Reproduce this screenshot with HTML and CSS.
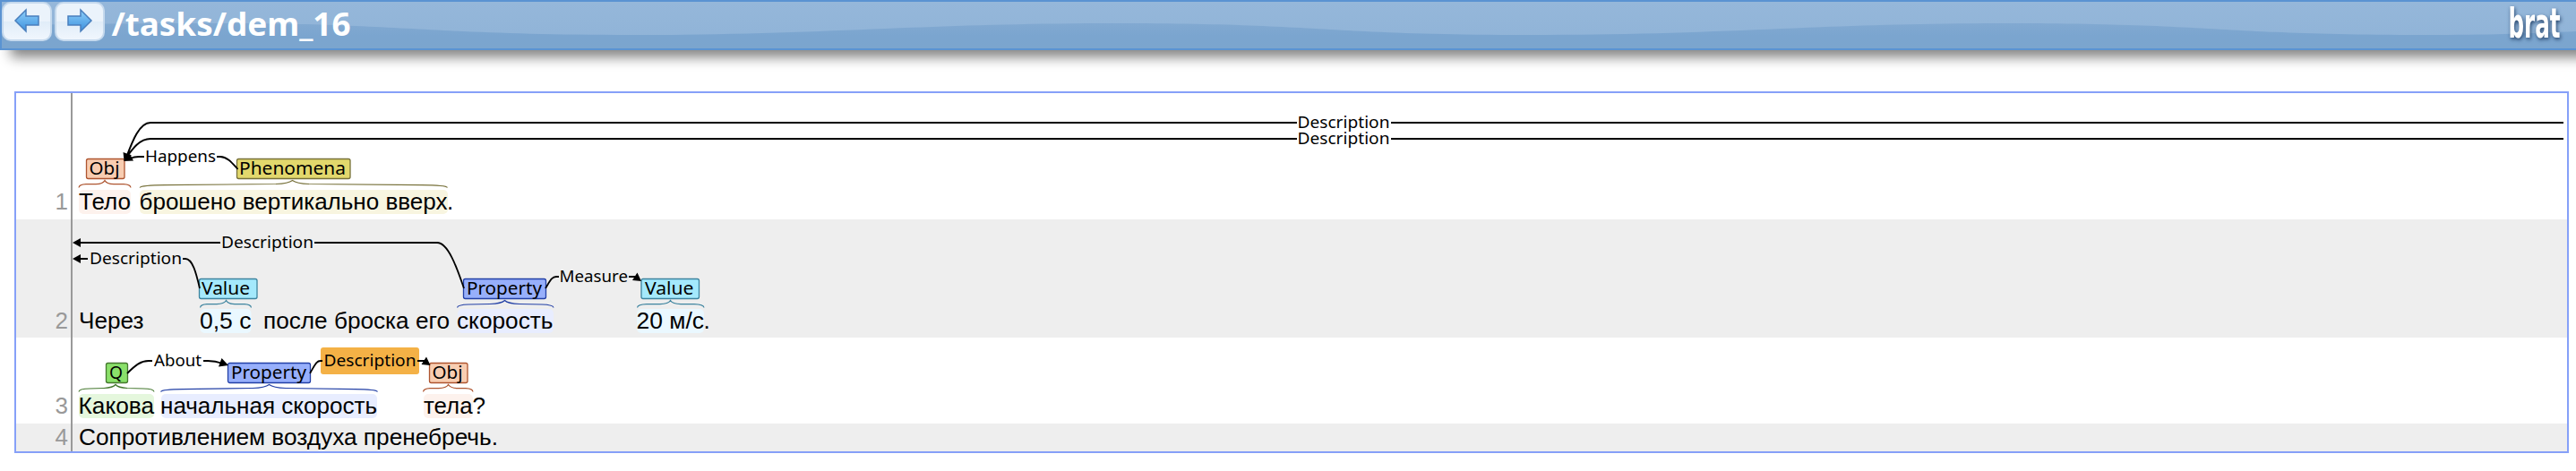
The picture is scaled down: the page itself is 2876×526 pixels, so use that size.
FILE: index.html
```html
<!DOCTYPE html>
<html lang="ru">
<head>
<meta charset="utf-8">
<title>/tasks/dem_16</title>
<link rel="stylesheet" href="styles.css">
</head>
<body>
<header class="header">
  <svg class="wave" width="2874" height="52" viewBox="2 2 2874 52">
    <path fill="url(#waveFill)" d="M2 29C80 26 160 26 247 26C450 26 480 39 706 39S1020 26 1247 26S1480 39 1706 39S2020 26 2247 26S2480 39 2706 39C2790 39 2830 37 2876 35V54H2z"/>
    <defs>
      <linearGradient id="waveFill" x1="0" y1="0" x2="0" y2="1"><stop offset="0" stop-color="#82a9d1"/><stop offset=".5" stop-color="#7ba5cf"/><stop offset="1" stop-color="#7ba5ce"/></linearGradient>
      <linearGradient id="arrowFill" x1="0" y1="0" x2="0" y2="1"><stop offset="0" stop-color="#8fd0fa"/><stop offset="1" stop-color="#3b8fdd"/></linearGradient>
    </defs>
  </svg>
  <nav class="nav">
    <button class="nav-button" aria-label="Previous"><svg width="30" height="28" viewBox="0 0 30 28"><path class="nav-arrow" d="M14 2V9H28V19H14V26L2 14z"/></svg></button>
    <button class="nav-button" aria-label="Next"><svg width="30" height="28" viewBox="0 0 30 28"><path class="nav-arrow" d="M16 2V9H2V19H16V26L28 14z"/></svg></button>
  </nav>
  <svg class="path" width="270" height="52" viewBox="124 2 270 52"><text x="124.500" y="40" textLength="267" lengthAdjust="spacingAndGlyphs">/tasks/dem_16</text></svg>
  <svg class="logo" width="66" height="52" viewBox="2796 2 66 52"><text x="2800.500" y="42" textLength="58" lengthAdjust="spacingAndGlyphs">brat</text></svg>
</header>

<main class="document">
  <section class="sentence s1">
    <div class="number">1</div>
    <svg class="canvas" width="2785" height="141" viewBox="81 104 2785 141">
      <rect class="mark obj" x="88" y="212" width="58" height="27" rx="5"/>
      <rect class="mark phen" x="156" y="212" width="344" height="27" rx="5"/>
      <path class="curly obj" d="M88 209.500Q88.500 206 96 205.700H107Q115 205.500 117 201.500Q119 205.500 127 205.700H138Q145.500 206 146 209.500"/>
      <path class="curly phen" d="M156 209.500Q158 207 184 206.700L308 205.500Q322 205 326.500 201.500Q331 205 345 205.500L471 206.700Q498 207 499.500 209.500"/>
      <rect class="box obj" x="96.500" y="177.500" width="42.500" height="22" rx="2"/>
      <rect class="box phen" x="264.500" y="177.500" width="126.500" height="22" rx="2"/>
      <path class="arc" d="M1448 137H168C155 137 147 160 141 176M1553 137H2862M1448 155H168C156 155 148 166 141 176M1553 155H2862"/>
      <path class="arc thin" d="M161 175H155Q150 175 145 177M242 175H246C254 175 260 183 265.500 189"/>
      <path class="tip" d="M138.500 179.500L137.500 170L147 173.500zM138 180L145 172L149 179.500z"/>
      <g class="label"><text x="99.500" y="195" textLength="34" lengthAdjust="spacingAndGlyphs">Obj</text><text x="267" y="195" textLength="119" lengthAdjust="spacingAndGlyphs">Phenomena</text></g>
      <g class="relation"><text x="162" y="181" textLength="79" lengthAdjust="spacingAndGlyphs">Happens</text><text x="1448.500" y="143" textLength="103" lengthAdjust="spacingAndGlyphs">Description</text><text x="1448.500" y="161" textLength="103" lengthAdjust="spacingAndGlyphs">Description</text></g>
      <g class="words"><text x="88" y="234" textLength="58" lengthAdjust="spacingAndGlyphs">Тело</text><text x="155.500" y="234" textLength="344" lengthAdjust="spacingAndGlyphs">брошено вертикально вверх</text><text x="499" y="234">.</text></g>
    </svg>
  </section>

  <section class="sentence s2 shaded">
    <div class="number">2</div>
    <svg class="canvas" width="2785" height="132" viewBox="81 245 2785 132">
      <rect class="mark val" x="223.500" y="345" width="57" height="27" rx="5"/>
      <rect class="mark prop" x="511" y="345" width="107" height="27" rx="5"/>
      <rect class="mark val" x="711" y="345" width="75" height="27" rx="5"/>
      <path class="curly val" d="M223.500 343.500Q224 340 231 339.700H242Q250 339.500 252.500 335.500Q254.500 339.500 262 339.700H273Q280 340 280.500 343.500M711.500 343.500Q712 340 722 339.700H737Q746 339.500 748.500 335.500Q751 339.500 760 339.700H775Q785.500 340 786 343.500"/>
      <path class="curly prop" d="M510.500 343.500Q511 340.300 523 340L547 339.500Q560 339 563.500 335.500Q567 339 580 339.500L605 340Q617.500 340.300 618 343.500"/>
      <rect class="box val" x="222.500" y="311.500" width="64.500" height="22" rx="2"/>
      <rect class="box prop" x="517.500" y="311.500" width="92" height="22" rx="2"/>
      <rect class="box val" x="716" y="311.500" width="64.500" height="22" rx="2"/>
      <path class="arc" d="M88 271H246M351 271H489M88 289H98"/>
      <path class="arc thin" d="M488 271C501 271 511 302 518 322M204 289H207C215 289 219 305 223 322M609 322C614 314 616 309 621 309H624M702 309H710"/>
      <path class="tip" d="M81 271L90 266V276zM81 289L90 284V294zM716 314L711.500 304.500L706 313z"/>
      <g class="label"><text x="225" y="329" textLength="54" lengthAdjust="spacingAndGlyphs">Value</text><text x="521" y="329" textLength="84" lengthAdjust="spacingAndGlyphs">Property</text><text x="720" y="329" textLength="54.500" lengthAdjust="spacingAndGlyphs">Value</text></g>
      <g class="relation"><text x="247" y="277" textLength="103" lengthAdjust="spacingAndGlyphs">Description</text><text x="100" y="295" textLength="103" lengthAdjust="spacingAndGlyphs">Description</text><text x="624.500" y="315" textLength="76.500" lengthAdjust="spacingAndGlyphs">Measure</text></g>
      <g class="words"><text x="88" y="367" textLength="72.500" lengthAdjust="spacingAndGlyphs">Через</text><text x="223" y="367" textLength="57.500" lengthAdjust="spacingAndGlyphs">0,5 с</text><text x="294" y="367" textLength="208" lengthAdjust="spacingAndGlyphs">после броска его</text><text x="510" y="367" textLength="107.500" lengthAdjust="spacingAndGlyphs">скорость</text><text x="710.500" y="367" textLength="75.500" lengthAdjust="spacingAndGlyphs">20 м/с</text><text x="785.500" y="367">.</text></g>
    </svg>
  </section>

  <section class="sentence s3">
    <div class="number">3</div>
    <svg class="canvas" width="2785" height="96" viewBox="81 377 2785 96">
      <rect class="mark q" x="88" y="440" width="84" height="27" rx="5"/>
      <rect class="mark prop" x="180" y="440" width="241" height="27" rx="5"/>
      <rect class="mark obj" x="473" y="440" width="55" height="27" rx="5"/>
      <path class="curly q" d="M88 437.500Q88.500 434.200 100 434L116 433.500Q126 433 129 429.500Q132 433 142 433.500L160 434Q171.500 434.200 172 437.500"/>
      <path class="curly prop" d="M179.500 437.500Q181 435 204 434.700L282 433.500Q296 433 300.500 429.500Q305 433 319 433.500L396 434.700Q420 435 421.500 437.500"/>
      <path class="curly obj" d="M472.500 437.500Q473 434 480 433.700H490Q498 433.500 500.500 429.500Q503 433.500 511 433.700H520Q527.500 434 528 437.500"/>
      <rect class="box q" x="118.500" y="405.500" width="24" height="22" rx="2"/>
      <rect class="box prop" x="254.500" y="405.500" width="92" height="22" rx="2"/>
      <rect class="box obj" x="479.500" y="405.500" width="42.500" height="22" rx="2"/>
      <rect class="selected" x="358" y="388" width="110" height="30" rx="3"/>
      <path class="arc thin" d="M142 417C151 408 157 403 166 403H170M227 403H232Q240 403 249 406M346 417C352 407 353 403 358 403H360M466 403H475"/>
      <path class="tip" d="M255 408L247.500 400L244 409.500zM480.500 408L476 398.500L470.500 407z"/>
      <g class="label"><text x="122" y="423" textLength="15" lengthAdjust="spacingAndGlyphs">Q</text><text x="258" y="423" textLength="84" lengthAdjust="spacingAndGlyphs">Property</text><text x="482.500" y="423" textLength="34" lengthAdjust="spacingAndGlyphs">Obj</text></g>
      <g class="relation"><text x="172" y="409" textLength="53" lengthAdjust="spacingAndGlyphs">About</text><text x="361.500" y="409" textLength="103" lengthAdjust="spacingAndGlyphs">Description</text></g>
      <g class="words"><text x="87.500" y="462" textLength="84.500" lengthAdjust="spacingAndGlyphs">Какова</text><text x="179" y="462" textLength="242" lengthAdjust="spacingAndGlyphs">начальная скорость</text><text x="473" y="462" textLength="54.500" lengthAdjust="spacingAndGlyphs">тела</text><text x="527.500" y="462">?</text></g>
    </svg>
  </section>

  <section class="sentence s4 shaded">
    <div class="number">4</div>
    <svg class="canvas" width="2785" height="31" viewBox="81 473 2785 31">
      <g class="words"><text x="88" y="497" textLength="468" lengthAdjust="spacingAndGlyphs">Сопротивлением воздуха пренебречь.</text></g>
    </svg>
  </section>
</main>
</body>
</html>
```
FILE: styles.css
```css
* { box-sizing: border-box; }
html { overflow: hidden; }
body { margin: 0; background: #fff; overflow: hidden; height: 526px; font-family: "Liberation Sans", Arial, sans-serif; }

.header {
  position: relative;
  display: flex;
  align-items: flex-start;
  width: 2890px;
  height: 56px;
  border: 2px solid #5a93d2;
  background: linear-gradient(#95b7da, #8fb3d7);
  box-shadow: 12px 8px 13px #858585;
}
.wave { position: absolute; left: 0; top: 0; }
.nav { position: relative; display: flex; gap: 3px; }
.nav-button {
  display: flex;
  align-items: flex-start;
  justify-content: center;
  width: 56px;
  height: 44px;
  padding: 5px 0 0;
  border: 2px solid #c5d9ed;
  border-radius: 10px;
  background: linear-gradient(#ebf3fb 50%, #e0ecf8 50%, #f0f6fd);
}
.nav-arrow { fill: url(#arrowFill); stroke: #4a7fbd; stroke-width: 1.5; }
.path { position: relative; margin-left: 7px; }
.path text { font: bold 36px "Noto Sans", "Open Sans", sans-serif; fill: #fff; }
.logo { position: relative; margin-left: 2402px; overflow: visible; filter: drop-shadow(1px 2px 2px #27466d); }
.logo text { font: bold 46px "DejaVu Sans Condensed", "DejaVu Sans", sans-serif; fill: #fff; }

.document { width: 2852px; margin: 46px 0 0 16px; border: 2px solid #86a0f8; }
.sentence { display: flex; }
.shaded { background: #eee; }
.number {
  display: flex;
  align-items: flex-end;
  justify-content: flex-end;
  width: 63px;
  padding-right: 3px;
  border-right: 2px solid #999;
  color: #999;
  font-size: 26px;
  line-height: 30px;
}
.s1 .number, .s3 .number { padding-bottom: 5px; }
.s2 .number { padding-bottom: 4px; }
.s4 .number { padding-bottom: 1px; }
.canvas { display: block; }

.words { font: 26px "Liberation Sans", Arial, sans-serif; fill: #000; }
.label { font: 19px "Noto Sans", "Open Sans", sans-serif; }
.relation { font: 18px "Noto Sans", "Open Sans", sans-serif; }
.arc { fill: none; stroke: #000; stroke-width: 2; }
.arc.thin { stroke-width: 1.8; }
.tip { fill: #000; }
.curly { fill: none; stroke-width: 1.2; }
.box { stroke-width: 1.3; }
.box.obj { fill: #f8cdb1; stroke: #ae5530; }
.box.phen { fill: #e2d86c; stroke: #77713a; }
.box.val { fill: #a4e9fc; stroke: #3d849f; }
.box.prop { fill: #97affb; stroke: #2340a6; }
.box.q { fill: #8ae06a; stroke: #45782f; }
.curly.obj { stroke: #ae5530; }
.curly.phen { stroke: #77713a; }
.curly.val { stroke: #3d849f; }
.curly.prop { stroke: #2340a6; }
.curly.q { stroke: #45782f; }
.mark.obj { fill: #fdf2ed; }
.mark.phen { fill: #f8f5e0; }
.mark.val { fill: #eaf8ff; }
.mark.prop { fill: #e8edff; }
.mark.q { fill: #e5f7dd; }
.selected { fill: #f4b146; }
```
